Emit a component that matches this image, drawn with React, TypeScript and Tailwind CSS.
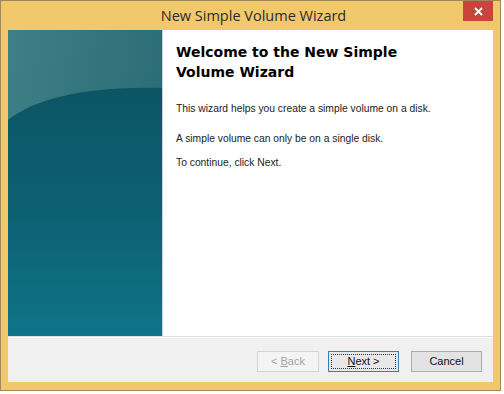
export default function App() {
    return (
        <div className="w-[504px] h-[394px] bg-white" style={{ fontFamily: "'Liberation Sans', Arial, sans-serif" }}>
            <div className="w-[501px] h-[391px] flex flex-col bg-[#f1c96c] border border-[#9c8a5c]">
                {/* title bar */}
                <div className="relative h-[29px] shrink-0 flex items-center justify-center">
                    <span className="text-[14.5px] text-[#2b2b2b] pl-[6px]" style={{ fontFamily: "'Open Sans', 'Noto Sans', sans-serif" }}>
                        New Simple Volume Wizard
                    </span>
                    <div className="absolute right-[7px] top-0 w-[30px] h-[20px] bg-[#c7453c] flex items-center justify-center">
                        <svg width="9" height="9" viewBox="0 0 9 9">
                            <path d="M1 1 L8 8 M8 1 L1 8" stroke="#fff" strokeWidth="1.8" />
                        </svg>
                    </div>
                </div>

                {/* client area */}
                <div className="mx-[7px] h-[352px] flex flex-col bg-[#f0f0f0]">
                    <div className="flex h-[306px]">
                        <div className="w-[155px] h-full shrink-0 border-r border-[#c9d2d4]">
                            <svg width="154" height="306" viewBox="0 0 154 306" preserveAspectRatio="none">
                                <defs>
                                    <linearGradient id="top" x1="0" y1="0" x2="1" y2="0.4">
                                        <stop offset="0" stopColor="#3f7f86" />
                                        <stop offset="1" stopColor="#2a6c75" />
                                    </linearGradient>
                                    <linearGradient id="bot" x1="0" y1="0" x2="0" y2="1">
                                        <stop offset="0" stopColor="#0b5565" />
                                        <stop offset="0.5" stopColor="#0d6072" />
                                        <stop offset="1" stopColor="#0f7488" />
                                    </linearGradient>
                                </defs>
                                <rect width="154" height="306" fill="url(#top)" />
                                <path d="M0 90 C 28 68, 80 56, 154 58 L154 306 L0 306 Z" fill="url(#bot)" />
                            </svg>
                        </div>
                        <div className="flex-1 bg-white pl-[13px] pt-[12px]">
                            <h1 className="text-[14px] leading-[20px] font-bold text-black w-[240px]" style={{ fontFamily: "'DejaVu Sans', Verdana, sans-serif" }}>
                                Welcome to the New Simple Volume Wizard
                            </h1>
                            <div className="text-[10.3px] leading-[13px] text-[#222]">
                                <p className="mt-[20px]">This wizard helps you create a simple volume on a disk.</p>
                                <p className="mt-[17px]">A simple volume can only be on a single disk.</p>
                                <p className="mt-[11px]">To continue, click Next.</p>
                            </div>
                        </div>
                    </div>
                    <div className="h-px bg-[#dfdfdf]" />
                    <div className="h-px bg-white" />
                    <div className="flex-1 flex items-start justify-end pt-[13px] pr-[11px] text-[11px]">
                        <button className="w-[62px] h-[21px] border border-[#d5d5d5] bg-[#f4f4f4] text-[#a3a3a3]">
                            &lt; <span className="underline">B</span>ack
                        </button>
                        <button className="ml-[9px] w-[71px] h-[21px] border border-[#3c7fb1] bg-[#e8e8e8] text-[#111] p-[2px]">
                            <span className="flex items-center justify-center w-full h-full border border-dotted border-[#333]">
                                <span className="underline">N</span>ext &gt;
                            </span>
                        </button>
                        <button className="ml-[12px] w-[71px] h-[21px] border border-[#acacac] bg-[#e3e3e3] text-[#111]">
                            Cancel
                        </button>
                    </div>
                </div>
            </div>
        </div>
    );
}
